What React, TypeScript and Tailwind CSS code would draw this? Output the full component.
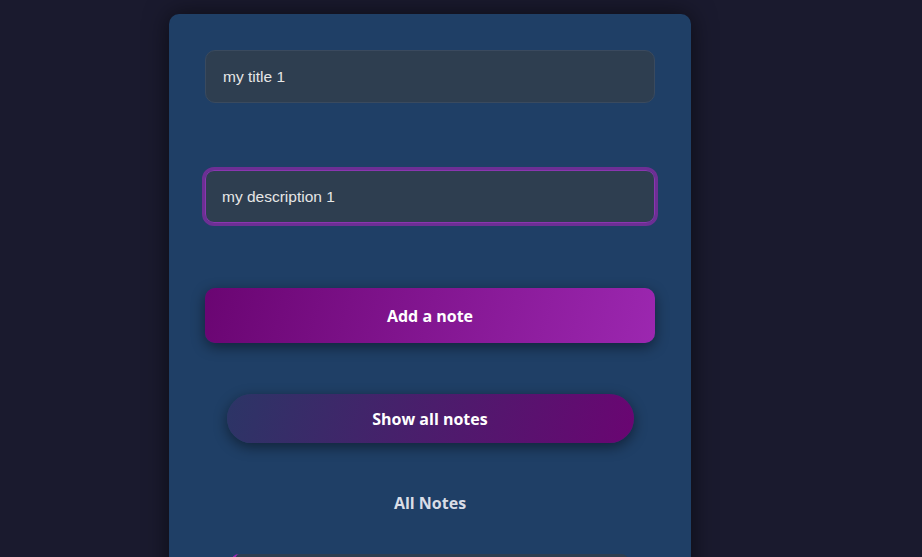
import React from "react";

export default function App() {
  return (
    <div className="h-[557px] overflow-hidden bg-[#1a1a2e] flex" style={{ fontFamily: "'Liberation Sans', Arial, sans-serif" }}>
      <div className="ml-[169px] mt-[14px] w-[522px] shrink-0 h-[600px] rounded-[10px] bg-[#1f3f66] shadow-[0_0_24px_rgba(0,0,0,0.55)] px-[36px] pt-[36px] flex flex-col">
        <input
          readOnly
          value="my title 1"
          className="shrink-0 w-full h-[53px] rounded-[10px] bg-[#2e3e50] border border-[#3a4a5e] px-[17px] text-[15.5px] text-[#e6e6e6] outline-none"
        />
        <div className="shrink-0 mt-[64px] rounded-[12px] border-[3px] border-[#6d2f94] -mx-[3px]">
          <input
            readOnly
            value="my description 1"
            className="w-full h-[53px] rounded-[9px] bg-[#2e3e50] border border-[#8a36b0] px-[16px] text-[15.5px] text-[#e6e6e6] outline-none block"
          />
        </div>
        <button
          className="shrink-0 mt-[62px] w-full h-[55px] rounded-[10px] bg-[linear-gradient(105deg,#6a0572,#9c27b0)] shadow-[0_4px_14px_rgba(0,0,0,0.45)] text-white text-[16px] font-bold"
          style={{ fontFamily: "'Open Sans', 'Noto Sans', sans-serif" }}
        >
          Add a note
        </button>
        <button
          className="shrink-0 mt-[51px] mx-auto w-[407px] h-[49px] rounded-full bg-[linear-gradient(105deg,#2c3566,#6a0572)] shadow-[0_4px_14px_rgba(0,0,0,0.45)] text-white text-[16px] font-bold"
          style={{ fontFamily: "'Open Sans', 'Noto Sans', sans-serif" }}
        >
          Show all notes
        </button>
        <h2
          className="shrink-0 mt-[48px] text-center text-[16px] font-bold text-[#d9dde6] leading-[24px]"
          style={{ fontFamily: "'Open Sans', 'Noto Sans', sans-serif" }}
        >
          All Notes
        </h2>
        <div className="shrink-0 mt-[39px] mx-auto w-[398px] h-[80px] rounded-[8px] bg-[#2e3e50] border-l-[4px] border-[#9c27b0]"></div>
      </div>
    </div>
  );
}
